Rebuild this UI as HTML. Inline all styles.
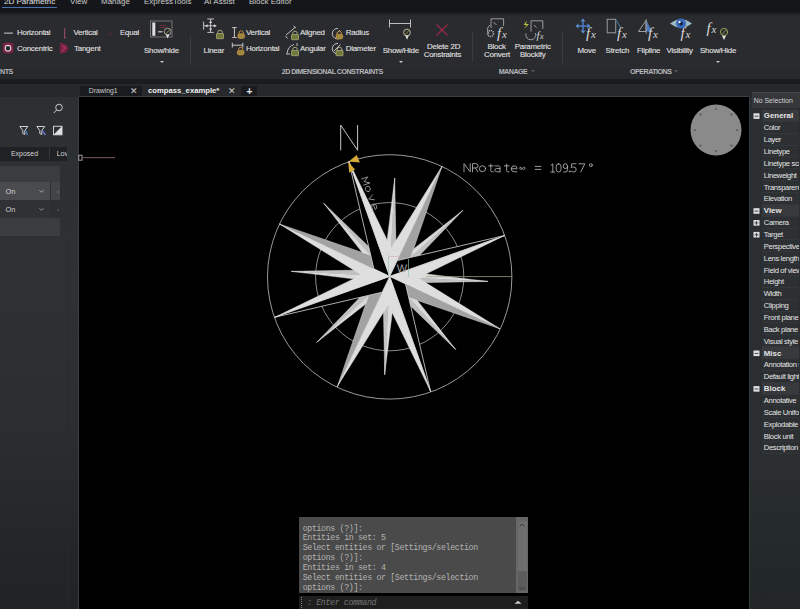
<!DOCTYPE html>
<html><head><meta charset="utf-8">
<style>
*{margin:0;padding:0;box-sizing:border-box}
html,body{width:800px;height:609px;overflow:hidden;background:#000}
body{position:relative;font-family:"Liberation Sans",sans-serif;color:#d8d8d8}
.a{position:absolute;white-space:nowrap}
#topbar{left:0;top:0;width:800px;height:12px;background:#151619}
#ribbon{left:0;top:11.5px;width:800px;height:67.5px;background:linear-gradient(#17181b 0px,#1e1f22 1.5px,#27282c 3px,#2a2b2f 4px,#2a2b2f 55.5px,#28292d 56.5px,#27282c 67.5px)}
#rbot{left:0;top:78.5px;width:800px;height:5px;background:#1b1c1f}
#docbar{left:0;top:83.5px;width:800px;height:13.5px;background:#26282b}
.tt{font-size:8px;line-height:10px;top:-3.4px;color:#cacaca}
.rl{font-size:7.9px;letter-spacing:-0.22px;color:#e2e2e2;line-height:10px;-webkit-text-stroke:0.1px #e2e2e2}
.sec{font-size:7.2px;letter-spacing:-0.55px;font-weight:bold;color:#b4b6b9;line-height:8px}
.sep{width:1px;background:#3a3c40}
#left{left:0;top:97px;width:78px;height:512px;background:linear-gradient(#2d3033 0px,#2e3134 200px,#2a2e31 330px,#222528 470px,#212427 512px)}
#lborder{left:78px;top:97px;width:1px;height:512px;background:#3a3c40}
#draw{left:79px;top:97px;width:670px;height:512px;background:#000}
#right{left:749px;top:97px;width:51px;height:512px;background:linear-gradient(#2b2e31 0px,#2b2e31 380px,#282c2d 385px,#252a2a 435px,#212526 519px);border-left:1px solid #383b3e}
.pr{font-size:7.2px;color:#d0d0d0;line-height:11.86px}
.cmd{font-family:"Liberation Mono",monospace;font-size:8.3px;letter-spacing:-0.37px;color:#b4b4b4;line-height:9.87px}
</style></head><body>
<div class="a" id="topbar"></div>
<div class="a" id="ribbon"></div>
<div class="a" id="rbot"></div>
<div class="a" id="docbar"></div>
<div class="a" id="left"></div>
<div class="a" id="lborder"></div>
<div class="a" style="left:67.5px;top:240px;width:1px;height:369px;background:#282b2e;opacity:0.7"></div>
<div class="a" id="draw"></div>
<div class="a" id="right"></div>

<!-- top tabs -->
<div class="a tt" style="left:4px;color:#e0e0e0">2D Parametric</div>
<div class="a" style="left:1.5px;top:7px;width:55.5px;height:1.2px;background:#4a72b0"></div>
<div class="a tt" style="left:70px">View</div>
<div class="a tt" style="left:101px">Manage</div>
<div class="a tt" style="left:144px">ExpressTools</div>
<div class="a tt" style="left:204px">AI Assist</div>
<div class="a tt" style="left:249px">Block Editor</div>

<!-- ribbon section 1 -->
<div class="a rl" style="left:17px;top:28px">Horizontal</div>
<div class="a rl" style="left:17px;top:43.7px">Concentric</div>
<div class="a rl" style="left:73.5px;top:27.5px">Vertical</div>
<div class="a rl" style="left:74px;top:43.6px">Tangent</div>
<div class="a rl" style="left:120px;top:27.5px">Equal</div>
<div class="a rl" style="left:144px;top:46px">Show/hide</div>
<div class="a" style="left:159.5px;top:60.5px;width:0;height:0;border-left:2px solid transparent;border-right:2px solid transparent;border-top:2px solid #ccc"></div>
<div class="a sep" style="left:190px;top:36px;height:27px"></div>
<div class="a sec" style="left:0px;top:67.5px">NTS</div>

<!-- section 2: dimensional -->
<div class="a rl" style="left:203.5px;top:45.7px">Linear</div>
<div class="a rl" style="left:246px;top:27.5px">Vertical</div>
<div class="a rl" style="left:246px;top:43.6px">Horizontal</div>
<div class="a rl" style="left:300px;top:27.7px">Aligned</div>
<div class="a rl" style="left:300px;top:43.7px">Angular</div>
<div class="a rl" style="left:345.7px;top:27.7px">Radius</div>
<div class="a rl" style="left:345.7px;top:43.7px">Diameter</div>
<div class="a rl" style="left:382.7px;top:45.7px">Show/Hide</div>
<div class="a" style="left:398.5px;top:61px;width:0;height:0;border-left:2px solid transparent;border-right:2px solid transparent;border-top:2px solid #ccc"></div>
<div class="a rl" style="left:427px;top:41.8px">Delete 2D</div>
<div class="a rl" style="left:423.7px;top:49.8px">Constraints</div>
<div class="a sec" style="left:281.7px;top:67.5px">2D DIMENSIONAL CONSTRAINTS</div>
<div class="a sep" style="left:472px;top:32px;height:30px"></div>

<!-- section 3: manage -->
<div class="a rl" style="left:487.5px;top:41.6px">Block</div>
<div class="a rl" style="left:484px;top:49.6px">Convert</div>
<div class="a rl" style="left:514.7px;top:41.6px">Parametric</div>
<div class="a rl" style="left:520px;top:49.6px">Blockify</div>
<div class="a sec" style="left:498.7px;top:67.5px">MANAGE</div>
<div class="a sep" style="left:562px;top:32px;height:31px"></div>

<!-- section 4: operations -->
<div class="a rl" style="left:577.5px;top:45.7px">Move</div>
<div class="a rl" style="left:605.6px;top:45.7px">Stretch</div>
<div class="a rl" style="left:637px;top:45.7px">Flipline</div>
<div class="a rl" style="left:666.5px;top:45.7px">Visibility</div>
<div class="a rl" style="left:700px;top:45.7px">Show/Hide</div>
<div class="a" style="left:715.5px;top:61px;width:0;height:0;border-left:2px solid transparent;border-right:2px solid transparent;border-top:2px solid #ccc"></div>
<div class="a sec" style="left:630px;top:67.5px">OPERATIONS</div>


<!-- ribbon icons -->
<svg class="a" style="left:0;top:0" width="800" height="80" viewBox="0 0 800 80">
<defs>
<g id="lockG"><path d="M1.2,3.2 v-1.2 a2.3,2.3 0 0 1 4.6,0 v1.2" fill="none" stroke="#b8b890" stroke-width="0.9"/><rect x="0" y="3" width="7" height="5.2" rx="0.6" fill="#6f7838" stroke="#a8ac78" stroke-width="0.8"/></g>
<g id="lockO"><path d="M1.2,3 v-1 a2.2,2.2 0 0 1 4.4,0 v1" fill="none" stroke="#c89040" stroke-width="0.9"/><rect x="0" y="2.8" width="6.8" height="4.6" rx="1.8" fill="#9a8a40" stroke="#c88a38" stroke-width="0.8"/></g>
<g id="fx"><text x="0" y="0" font-family="Liberation Serif" font-style="italic" font-size="15" fill="#d8d8d8">f</text><text x="5" y="0" font-family="Liberation Serif" font-style="italic" font-size="11" fill="#d8d8d8">x</text></g>
</defs>
<!-- section1 -->
<rect x="4" y="32.6" width="9" height="1" fill="#cfcfcf"/>
<rect x="2.8" y="42.8" width="10.5" height="10.5" rx="2" fill="#7c2240"/>
<circle cx="8" cy="48.2" r="2.8" fill="#262628" stroke="#d8d8d8" stroke-width="1.1"/>
<rect x="64" y="28" width="1.2" height="9" fill="#8c4a62"/>
<rect x="64" y="37" width="1.6" height="1.4" fill="#a05070"/>
<path d="M60,42.5 L66,44.5 L68.5,48 L66,52.5 L60,53.5 Z" fill="#7c2240"/>
<path d="M62,45.5 L65.5,48 L62,51" fill="none" stroke="#b04a6a" stroke-width="1"/>
<circle cx="110" cy="34" r="1.8" fill="#4a2a38"/>
<rect x="150.5" y="21" width="21.5" height="16" fill="none" stroke="#7c7c7c" stroke-width="0.9"/>
<rect x="152.3" y="22.5" width="3" height="13.3" fill="#e0e0e0"/>
<rect x="159.5" y="25" width="7" height="0.9" fill="#6a3444"/>
<rect x="159.5" y="27.2" width="7" height="0.9" fill="#6a3444"/>
<rect x="158" y="31.2" width="4.5" height="1.2" fill="#c8c8c8"/>
<circle cx="167.6" cy="31.6" r="3.4" fill="none" stroke="#b4b4a8" stroke-width="0.8"/>
<path d="M165.5,34 L170,29.5" stroke="#a8a840" stroke-width="0.8"/>
<path d="M165.8,34.6 L167.6,38.6 L169.4,34.6 Z" fill="#e0e0e0"/>
<!-- linear -->
<g stroke="#d0d0d0" stroke-width="0.9" fill="#d8d8d8">
<line x1="210.6" y1="19" x2="210.6" y2="32.4"/><line x1="207.3" y1="19" x2="214" y2="19" /><line x1="207.3" y1="32.4" x2="213.8" y2="32.4"/>
<line x1="203.6" y1="25.8" x2="216.3" y2="25.8"/><line x1="203.6" y1="21.6" x2="203.6" y2="29.8"/>
<path d="M210.6,20.5 l-1.6,2.6 h3.2z M210.6,31 l-1.6,-2.6 h3.2z M205,25.8 l2.6,-1.6 v3.2z M216.5,25.8 l-2.6,-1.6 v3.2z" stroke="none"/>
</g>
<use href="#lockG" x="216.5" y="30.5"/>
<!-- vertical/horizontal dims -->
<g stroke="#d8d8d8" stroke-width="0.9">
<line x1="234.4" y1="27.6" x2="234.4" y2="37.5"/><line x1="232.2" y1="27.6" x2="236.8" y2="27.6"/><line x1="232.2" y1="37.5" x2="236.8" y2="37.5" stroke="#d8b8d0"/>
<line x1="232.3" y1="45.2" x2="242.8" y2="45.2"/><line x1="232.3" y1="42.8" x2="232.3" y2="47.6"/><line x1="242.8" y1="42.8" x2="242.8" y2="47.6"/>
</g>
<use href="#lockO" x="237.8" y="31"/>
<use href="#lockO" x="237.3" y="47.5"/>
<!-- aligned / angular -->
<g stroke="#d0d0d0" stroke-width="0.9" fill="none">
<path d="M286,35 L295,27.5"/><path d="M285.5,36 l2,2.5 M293.5,26 l2.5,2"/>
<path d="M287,53.5 Q288,46 294,44.5"/><path d="M286,54 h4 M297,43 v3"/>
</g>
<use href="#lockG" x="291.5" y="31.5"/>
<use href="#lockG" x="291.5" y="47.5"/>
<!-- radius / diameter -->
<g stroke="#d0d0d0" stroke-width="0.9" fill="none">
<path d="M338,28.5 a5.2,5.2 0 1 0 4.5,6.5"/><path d="M336.5,33.5 l3.5,-3.5"/>
<path d="M338,43.5 a5.2,5.2 0 1 0 4.5,6.5"/><path d="M334,51 l6.5,-6.5"/>
</g>
<use href="#lockO" x="336" y="31.5"/>
<use href="#lockG" x="336" y="47.5"/>
<!-- show/hide dims -->
<g stroke="#d0d0d0" stroke-width="0.9" fill="none">
<line x1="389.5" y1="23.5" x2="410.5" y2="23.5"/><line x1="389.5" y1="19.5" x2="389.5" y2="27.5"/><line x1="410.5" y1="19.5" x2="410.5" y2="27.5"/>
</g>
<circle cx="407" cy="32.5" r="3.4" fill="none" stroke="#c8c8b0" stroke-width="0.9"/>
<path d="M405,34.8 L409,30.5" stroke="#b0a040" stroke-width="0.8"/>
<path d="M405.2,35.5 L407,39.8 L408.8,35.5 Z" fill="#e0e0e0"/>
<!-- delete X -->
<g stroke="#9c2a48" stroke-width="1.1"><line x1="436.5" y1="24.5" x2="447.5" y2="35.5"/><line x1="447.5" y1="24.5" x2="436.5" y2="35.5"/></g>
<!-- block convert -->
<g stroke="#a8a8a8" stroke-width="0.9" fill="none">
<path d="M491,28 V18.8 H503.6 V26"/><path d="M493.5,22 l3,3"/>
<path d="M490,25 a6,6 0 0 0 -1,9"/>
<circle cx="490.5" cy="33.5" r="3" stroke-dasharray="1.2 0.8" stroke-width="1.6"/>
</g>
<use href="#fx" x="497" y="37.5"/>
<!-- parametric blockify -->
<path d="M527,20.5 L523.5,25 L526.5,25 L524,29 L529,24 L526,24 Z" fill="#b8c040"/>
<g stroke="#a8a8a8" stroke-width="0.9" fill="none">
<path d="M531,31.5 V20.8 H542.8 V29"/><path d="M534,25 l2.5,2.5"/>
<path d="M535.5,33 a5,5 0 1 1 -9.5,0.5"/>
</g>
<g transform="translate(536.5,39) scale(0.72)"><use href="#fx"/></g>
<!-- move -->
<g stroke="#4a78c0" stroke-width="1.6"><line x1="583" y1="19.5" x2="583" y2="32.5"/><line x1="576.5" y1="26" x2="589.5" y2="26"/></g>
<path d="M583,18.5 l-2.5,3 h5z M583,33.5 l-2.5,-3 h5z M575.5,26 l3,-2.5 v5z M590.5,26 l-3,-2.5 v5z" fill="#5a88c8"/>
<use href="#fx" x="586" y="37.5"/>
<!-- stretch -->
<rect x="607.2" y="19.3" width="8.5" height="13.5" fill="none" stroke="#9a9a9a" stroke-width="1"/>
<path d="M616,20 L621,28" stroke="#3a7898" stroke-width="1.1"/>
<use href="#fx" x="617" y="37.5"/>
<!-- flipline -->
<path d="M646,20.5 L638.5,31.5 H646 Z" fill="none" stroke="#a0a0a0" stroke-width="1"/>
<path d="M646.5,20.5 L652,31.5 H646.5 Z" fill="#4a78c0"/>
<line x1="646.2" y1="19" x2="646.2" y2="34" stroke="#a8a8a8" stroke-width="0.8"/>
<use href="#fx" x="648" y="37.5"/>
<!-- visibility -->
<path d="M670,23.5 Q681,15 692,23.5 Q681,32 670,23.5 Z" fill="#9ab8c8"/>
<circle cx="681" cy="23.5" r="5" fill="#3a68b8"/>
<circle cx="681" cy="23.5" r="2" fill="#102040"/>
<circle cx="679.6" cy="22.2" r="1.1" fill="#ffffff"/>
<use href="#fx" x="680.5" y="37.5"/>
<!-- show/hide ops -->
<use href="#fx" x="706.5" y="32.5"/>
<circle cx="724" cy="32" r="3.6" fill="none" stroke="#a0b060" stroke-width="0.9"/>
<path d="M722,34.5 L726,30" stroke="#a0b060" stroke-width="0.8"/>
<path d="M722,35.8 L724,40 L726,35.8 Z" fill="#e0e0e0"/>
<!-- section chevrons -->
<path d="M531.5,70 l1.5,1.5 l1.5,-1.5" stroke="#8a8c90" stroke-width="0.8" fill="none"/>
<path d="M674.5,70 l1.5,1.5 l1.5,-1.5" stroke="#8a8c90" stroke-width="0.8" fill="none"/>
</svg>


<!-- left panel content -->
<svg class="a" style="left:0;top:95px" width="79" height="50" viewBox="0 95 79 50">
<circle cx="59" cy="107.5" r="3.3" fill="none" stroke="#c8c8c8" stroke-width="1"/>
<line x1="56.6" y1="110" x2="53.8" y2="113" stroke="#c8c8c8" stroke-width="1"/>
<path d="M19.8,126.5 h8 l-3,4 v4 l-2,-1 v-3 z" fill="none" stroke="#d0d0d0" stroke-width="1"/>
<path d="M25.5,130 l2,5" stroke="#4a7ac0" stroke-width="1.4"/>
<path d="M36.8,126.5 h8 l-3,4 v4 l-2,-1 v-3 z" fill="none" stroke="#d0d0d0" stroke-width="1"/>
<path d="M42,130.5 l3.5,4.5" stroke="#6a7ad0" stroke-width="1.4"/>
<rect x="53.5" y="126.3" width="8.5" height="8.5" fill="none" stroke="#d0d0d0" stroke-width="1"/>
<path d="M53.5,134.8 L62,126.3 V134.8 Z" fill="#e0e0e0"/>
</svg>
<div class="a" style="left:0;top:146.6px;width:66.5px;height:14px;background:#1f2124"></div>
<div class="a" style="left:49px;top:148px;width:1px;height:11px;background:#35373a"></div>
<div class="a" style="left:10.9px;top:149px;font-size:7px;line-height:10px;color:#d4d4d4">Exposed</div>
<div class="a" style="left:56.5px;top:149px;width:10px;overflow:hidden;font-size:7.4px;line-height:10px;color:#d0d0d0">Low</div>
<div class="a" style="left:0;top:165.5px;width:60px;height:16.4px;background:#3a3c40"></div>
<div class="a" style="left:0;top:181.9px;width:49.5px;height:18px;background:#494b4f"></div>
<div class="a" style="left:50.5px;top:181.9px;width:9.5px;height:18px;background:#424448"></div>
<div class="a" style="left:5.4px;top:187px;font-size:7.4px;line-height:10px;color:#d8d8d8">On</div>
<div class="a" style="left:0;top:200px;width:49.5px;height:17.5px;background:#2f3134"></div>
<div class="a" style="left:50.5px;top:200px;width:9.5px;height:17.5px;background:#2d2f32"></div>
<div class="a" style="left:5.4px;top:204.8px;font-size:7.4px;line-height:10px;color:#d0d0d0">On</div>
<div class="a" style="left:0;top:218px;width:60px;height:18px;background:#3a3c40"></div>
<svg class="a" style="left:0;top:180px" width="79" height="40" viewBox="0 180 79 40">
<path d="M39.5,190.3 l2,2 l2,-2" fill="none" stroke="#c0c0c0" stroke-width="0.8"/>
<path d="M39.5,208.3 l2,2 l2,-2" fill="none" stroke="#b0b0b0" stroke-width="0.8"/>
<rect x="57.5" y="191.5" width="1.2" height="1" fill="#909090"/>
<rect x="57.5" y="209.5" width="1.2" height="1" fill="#909090"/>
</svg>
<!-- drawing small red line -->
<svg class="a" style="left:76px;top:150px" width="45" height="15" viewBox="76 150 45 15">
<rect x="78.8" y="155.2" width="3.2" height="5" fill="none" stroke="#b8a8b0" stroke-width="0.9"/>
<line x1="82" y1="157.7" x2="115" y2="157.7" stroke="#7a5868" stroke-width="1"/>
</svg>

<!-- right panel -->
<div class="a" style="left:752.3px;top:92.4px;width:48px;height:15.3px;background:#35373b;border-top:1px solid #45474b"></div>
<div class="a" style="left:753.8px;top:96px;font-size:6.9px;line-height:10px;color:#d4d4d4">No Selection</div>
<div class="a" style="left:752px;top:109px;width:47px;height:345px;overflow:hidden">
<div class="a" style="left:10px;top:1.00px;width:40px;height:11.86px;background:#37393d;border-bottom:1px solid #33363a"></div><div class="a" style="left:11.8px;top:2.40px;line-height:10px;font-weight:bold;color:#e4e4e4;font-size:7.9px;">General</div>
<div class="a" style="left:10px;top:12.86px;width:40px;height:11.86px;background:#2d3033;border-bottom:1px solid #33363a"></div><div class="a" style="left:11.8px;top:14.26px;line-height:10px;color:#e4e4e4;font-size:7.6px;letter-spacing:-0.35px;">Color</div>
<div class="a" style="left:10px;top:24.72px;width:40px;height:11.86px;background:#2d3033;border-bottom:1px solid #33363a"></div><div class="a" style="left:11.8px;top:26.12px;line-height:10px;color:#e4e4e4;font-size:7.6px;letter-spacing:-0.35px;">Layer</div>
<div class="a" style="left:10px;top:36.58px;width:40px;height:11.86px;background:#2d3033;border-bottom:1px solid #33363a"></div><div class="a" style="left:11.8px;top:37.98px;line-height:10px;color:#e4e4e4;font-size:7.6px;letter-spacing:-0.35px;">Linetype</div>
<div class="a" style="left:10px;top:48.44px;width:40px;height:11.86px;background:#2d3033;border-bottom:1px solid #33363a"></div><div class="a" style="left:11.8px;top:49.84px;line-height:10px;color:#e4e4e4;font-size:7.6px;letter-spacing:-0.35px;">Linetype scale</div>
<div class="a" style="left:10px;top:60.30px;width:40px;height:11.86px;background:#2d3033;border-bottom:1px solid #33363a"></div><div class="a" style="left:11.8px;top:61.70px;line-height:10px;color:#e4e4e4;font-size:7.6px;letter-spacing:-0.35px;">Lineweight</div>
<div class="a" style="left:10px;top:72.16px;width:40px;height:11.86px;background:#2d3033;border-bottom:1px solid #33363a"></div><div class="a" style="left:11.8px;top:73.56px;line-height:10px;color:#e4e4e4;font-size:7.6px;letter-spacing:-0.35px;">Transparency</div>
<div class="a" style="left:10px;top:84.02px;width:40px;height:11.86px;background:#2d3033;border-bottom:1px solid #33363a"></div><div class="a" style="left:11.8px;top:85.42px;line-height:10px;color:#e4e4e4;font-size:7.6px;letter-spacing:-0.35px;">Elevation</div>
<div class="a" style="left:10px;top:95.88px;width:40px;height:11.86px;background:#37393d;border-bottom:1px solid #33363a"></div><div class="a" style="left:11.8px;top:97.28px;line-height:10px;font-weight:bold;color:#e4e4e4;font-size:7.9px;">View</div>
<div class="a" style="left:10px;top:107.74px;width:40px;height:11.86px;background:#2d3033;border-bottom:1px solid #33363a"></div><div class="a" style="left:11.8px;top:109.14px;line-height:10px;color:#e4e4e4;font-size:7.6px;letter-spacing:-0.35px;">Camera</div>
<div class="a" style="left:10px;top:119.60px;width:40px;height:11.86px;background:#2d3033;border-bottom:1px solid #33363a"></div><div class="a" style="left:11.8px;top:121.00px;line-height:10px;color:#e4e4e4;font-size:7.6px;letter-spacing:-0.35px;">Target</div>
<div class="a" style="left:10px;top:131.46px;width:40px;height:11.86px;background:#2d3033;border-bottom:1px solid #33363a"></div><div class="a" style="left:11.8px;top:132.86px;line-height:10px;color:#e4e4e4;font-size:7.6px;letter-spacing:-0.35px;">Perspective</div>
<div class="a" style="left:10px;top:143.32px;width:40px;height:11.86px;background:#2d3033;border-bottom:1px solid #33363a"></div><div class="a" style="left:11.8px;top:144.72px;line-height:10px;color:#e4e4e4;font-size:7.6px;letter-spacing:-0.35px;">Lens length</div>
<div class="a" style="left:10px;top:155.18px;width:40px;height:11.86px;background:#2d3033;border-bottom:1px solid #33363a"></div><div class="a" style="left:11.8px;top:156.58px;line-height:10px;color:#e4e4e4;font-size:7.6px;letter-spacing:-0.35px;">Field of view</div>
<div class="a" style="left:10px;top:167.04px;width:40px;height:11.86px;background:#2d3033;border-bottom:1px solid #33363a"></div><div class="a" style="left:11.8px;top:168.44px;line-height:10px;color:#e4e4e4;font-size:7.6px;letter-spacing:-0.35px;">Height</div>
<div class="a" style="left:10px;top:178.90px;width:40px;height:11.86px;background:#2d3033;border-bottom:1px solid #33363a"></div><div class="a" style="left:11.8px;top:180.30px;line-height:10px;color:#e4e4e4;font-size:7.6px;letter-spacing:-0.35px;">Width</div>
<div class="a" style="left:10px;top:190.76px;width:40px;height:11.86px;background:#2d3033;border-bottom:1px solid #33363a"></div><div class="a" style="left:11.8px;top:192.16px;line-height:10px;color:#e4e4e4;font-size:7.6px;letter-spacing:-0.35px;">Clipping</div>
<div class="a" style="left:10px;top:202.62px;width:40px;height:11.86px;background:#2d3033;border-bottom:1px solid #33363a"></div><div class="a" style="left:11.8px;top:204.02px;line-height:10px;color:#e4e4e4;font-size:7.6px;letter-spacing:-0.35px;">Front plane</div>
<div class="a" style="left:10px;top:214.48px;width:40px;height:11.86px;background:#2d3033;border-bottom:1px solid #33363a"></div><div class="a" style="left:11.8px;top:215.88px;line-height:10px;color:#e4e4e4;font-size:7.6px;letter-spacing:-0.35px;">Back plane</div>
<div class="a" style="left:10px;top:226.34px;width:40px;height:11.86px;background:#2d3033;border-bottom:1px solid #33363a"></div><div class="a" style="left:11.8px;top:227.74px;line-height:10px;color:#e4e4e4;font-size:7.6px;letter-spacing:-0.35px;">Visual style</div>
<div class="a" style="left:10px;top:238.20px;width:40px;height:11.86px;background:#37393d;border-bottom:1px solid #33363a"></div><div class="a" style="left:11.8px;top:239.60px;line-height:10px;font-weight:bold;color:#e4e4e4;font-size:7.9px;">Misc</div>
<div class="a" style="left:10px;top:250.06px;width:40px;height:11.86px;background:#2d3033;border-bottom:1px solid #33363a"></div><div class="a" style="left:11.8px;top:251.46px;line-height:10px;color:#e4e4e4;font-size:7.6px;letter-spacing:-0.35px;">Annotation scale</div>
<div class="a" style="left:10px;top:261.92px;width:40px;height:11.86px;background:#2d3033;border-bottom:1px solid #33363a"></div><div class="a" style="left:11.8px;top:263.32px;line-height:10px;color:#e4e4e4;font-size:7.6px;letter-spacing:-0.35px;">Default lighting</div>
<div class="a" style="left:10px;top:273.78px;width:40px;height:11.86px;background:#37393d;border-bottom:1px solid #33363a"></div><div class="a" style="left:11.8px;top:275.18px;line-height:10px;font-weight:bold;color:#e4e4e4;font-size:7.9px;">Block</div>
<div class="a" style="left:10px;top:285.64px;width:40px;height:11.86px;background:#2d3033;border-bottom:1px solid #33363a"></div><div class="a" style="left:11.8px;top:287.04px;line-height:10px;color:#e4e4e4;font-size:7.6px;letter-spacing:-0.35px;">Annotative</div>
<div class="a" style="left:10px;top:297.50px;width:40px;height:11.86px;background:#2d3033;border-bottom:1px solid #33363a"></div><div class="a" style="left:11.8px;top:298.90px;line-height:10px;color:#e4e4e4;font-size:7.6px;letter-spacing:-0.35px;">Scale Uniformly</div>
<div class="a" style="left:10px;top:309.36px;width:40px;height:11.86px;background:#2d3033;border-bottom:1px solid #33363a"></div><div class="a" style="left:11.8px;top:310.76px;line-height:10px;color:#e4e4e4;font-size:7.6px;letter-spacing:-0.35px;">Explodable</div>
<div class="a" style="left:10px;top:321.22px;width:40px;height:11.86px;background:#2d3033;border-bottom:1px solid #33363a"></div><div class="a" style="left:11.8px;top:322.62px;line-height:10px;color:#e4e4e4;font-size:7.6px;letter-spacing:-0.35px;">Block unit</div>
<div class="a" style="left:10px;top:333.08px;width:40px;height:11.86px;background:#2d3033;border-bottom:1px solid #33363a"></div><div class="a" style="left:11.8px;top:334.48px;line-height:10px;color:#e4e4e4;font-size:7.6px;letter-spacing:-0.35px;">Description</div>
<svg class="a" style="left:0;top:0" width="48" height="345" viewBox="0 0 48 345"><rect x="1.5" y="4.30" width="6" height="5.6" fill="#dedede"/><rect x="2.6" y="6.75" width="3.8" height="0.9" fill="#3a3a3a"/><rect x="1.5" y="99.18" width="6" height="5.6" fill="#dedede"/><rect x="2.6" y="101.63" width="3.8" height="0.9" fill="#3a3a3a"/><rect x="1.5" y="111.04" width="6" height="5.6" fill="#dedede"/><rect x="2.6" y="113.49" width="3.8" height="0.9" fill="#3a3a3a"/><rect x="4.05" y="112.04" width="0.9" height="3.8" fill="#3a3a3a"/><rect x="1.5" y="122.90" width="6" height="5.6" fill="#dedede"/><rect x="2.6" y="125.35" width="3.8" height="0.9" fill="#3a3a3a"/><rect x="4.05" y="123.90" width="0.9" height="3.8" fill="#3a3a3a"/><rect x="1.5" y="241.50" width="6" height="5.6" fill="#dedede"/><rect x="2.6" y="243.95" width="3.8" height="0.9" fill="#3a3a3a"/><rect x="1.5" y="277.08" width="6" height="5.6" fill="#dedede"/><rect x="2.6" y="279.53" width="3.8" height="0.9" fill="#3a3a3a"/></svg></div>

<!-- doc tabs -->
<div class="a" style="left:80px;top:86px;width:62px;height:10px;background:#1a1b1e"></div>
<div class="a" style="left:79px;top:96px;width:670px;height:1px;background:#3c3e42"></div>
<div class="a" style="left:88.8px;top:86.3px;font-size:6.8px;line-height:10px;color:#cccccc">Drawing1</div>
<div class="a" style="left:130px;top:86px;font-size:9px;line-height:10px;color:#d0d0d0">✕</div>
<div class="a" style="left:148px;top:86.3px;font-size:7.7px;line-height:10px;color:#f0f0f0;font-weight:bold">compass_example*</div>
<div class="a" style="left:228px;top:86px;font-size:9px;line-height:10px;color:#d0d0d0">✕</div>
<div class="a" style="left:241px;top:86px;width:16px;height:10px;background:#1a1b1e"></div>
<div class="a" style="left:246.5px;top:86.5px;font-size:10px;line-height:10px;color:#e8e8e8;font-weight:bold">+</div>

<!-- drawing -->
<svg class="a" style="left:0;top:0" width="800" height="609" viewBox="0 0 800 609">
<circle cx="389.7" cy="276.9" r="122.2" fill="none" stroke="#9a9a9a" stroke-width="1"/>
<circle cx="389.7" cy="276.7" r="74.1" fill="none" stroke="#9a9a9a" stroke-width="0.9"/>
<polygon points="389.70,276.40 394.73,178.03 384.51,261.80" fill="#dadada" stroke="#e6e6e6" stroke-width="0.4" stroke-linejoin="round"/>
<polygon points="389.70,276.40 394.73,178.03 396.36,262.40" fill="#c0c0c0" stroke="#e6e6e6" stroke-width="0.4" stroke-linejoin="round"/>
<polygon points="389.70,276.40 462.82,210.40 396.36,262.40" fill="#dadada" stroke="#e6e6e6" stroke-width="0.4" stroke-linejoin="round"/>
<polygon points="389.70,276.40 462.82,210.40 404.30,271.21" fill="#c0c0c0" stroke="#e6e6e6" stroke-width="0.4" stroke-linejoin="round"/>
<polygon points="389.70,276.40 488.07,281.43 404.30,271.21" fill="#dadada" stroke="#e6e6e6" stroke-width="0.4" stroke-linejoin="round"/>
<polygon points="389.70,276.40 488.07,281.43 403.70,283.06" fill="#c0c0c0" stroke="#e6e6e6" stroke-width="0.4" stroke-linejoin="round"/>
<polygon points="389.70,276.40 455.70,349.52 403.70,283.06" fill="#dadada" stroke="#e6e6e6" stroke-width="0.4" stroke-linejoin="round"/>
<polygon points="389.70,276.40 455.70,349.52 394.89,291.00" fill="#c0c0c0" stroke="#e6e6e6" stroke-width="0.4" stroke-linejoin="round"/>
<polygon points="389.70,276.40 384.67,374.77 394.89,291.00" fill="#dadada" stroke="#e6e6e6" stroke-width="0.4" stroke-linejoin="round"/>
<polygon points="389.70,276.40 384.67,374.77 383.04,290.40" fill="#c0c0c0" stroke="#e6e6e6" stroke-width="0.4" stroke-linejoin="round"/>
<polygon points="389.70,276.40 316.58,342.40 383.04,290.40" fill="#dadada" stroke="#e6e6e6" stroke-width="0.4" stroke-linejoin="round"/>
<polygon points="389.70,276.40 316.58,342.40 375.10,281.59" fill="#c0c0c0" stroke="#e6e6e6" stroke-width="0.4" stroke-linejoin="round"/>
<polygon points="389.70,276.40 291.33,271.37 375.10,281.59" fill="#dadada" stroke="#e6e6e6" stroke-width="0.4" stroke-linejoin="round"/>
<polygon points="389.70,276.40 291.33,271.37 375.70,269.74" fill="#c0c0c0" stroke="#e6e6e6" stroke-width="0.4" stroke-linejoin="round"/>
<polygon points="389.70,276.40 323.70,203.28 375.70,269.74" fill="#dadada" stroke="#e6e6e6" stroke-width="0.4" stroke-linejoin="round"/>
<polygon points="389.70,276.40 323.70,203.28 384.51,261.80" fill="#c0c0c0" stroke="#e6e6e6" stroke-width="0.4" stroke-linejoin="round"/>
<polygon points="389.70,276.40 442.17,166.04 383.84,259.91" fill="#dedede" stroke="#e6e6e6" stroke-width="0.4" stroke-linejoin="round"/>
<polygon points="389.70,276.40 442.17,166.04 406.19,270.54" fill="#a2a2a2" stroke="#e6e6e6" stroke-width="0.4" stroke-linejoin="round"/>
<polygon points="389.70,276.40 500.06,328.87 406.19,270.54" fill="#dedede" stroke="#e6e6e6" stroke-width="0.4" stroke-linejoin="round"/>
<polygon points="389.70,276.40 500.06,328.87 395.56,292.89" fill="#a2a2a2" stroke="#e6e6e6" stroke-width="0.4" stroke-linejoin="round"/>
<polygon points="389.70,276.40 337.23,386.76 395.56,292.89" fill="#dedede" stroke="#e6e6e6" stroke-width="0.4" stroke-linejoin="round"/>
<polygon points="389.70,276.40 337.23,386.76 373.21,282.26" fill="#a2a2a2" stroke="#e6e6e6" stroke-width="0.4" stroke-linejoin="round"/>
<polygon points="389.70,276.40 279.34,223.93 373.21,282.26" fill="#dedede" stroke="#e6e6e6" stroke-width="0.4" stroke-linejoin="round"/>
<polygon points="389.70,276.40 279.34,223.93 383.84,259.91" fill="#a2a2a2" stroke="#e6e6e6" stroke-width="0.4" stroke-linejoin="round"/>
<polygon points="389.70,276.40 348.77,161.26 373.90,268.89" fill="#000" stroke="#d8d8d8" stroke-width="0.8" stroke-linejoin="round"/>
<polygon points="389.70,276.40 348.77,161.26 397.21,260.60" fill="#dedede" stroke="#e6e6e6" stroke-width="0.4" stroke-linejoin="round"/>
<polygon points="389.70,276.40 504.84,235.47 397.21,260.60" fill="#000" stroke="#d8d8d8" stroke-width="0.8" stroke-linejoin="round"/>
<polygon points="389.70,276.40 504.84,235.47 405.50,283.91" fill="#dedede" stroke="#e6e6e6" stroke-width="0.4" stroke-linejoin="round"/>
<polygon points="389.70,276.40 430.63,391.54 405.50,283.91" fill="#000" stroke="#d8d8d8" stroke-width="0.8" stroke-linejoin="round"/>
<polygon points="389.70,276.40 430.63,391.54 382.19,292.20" fill="#dedede" stroke="#e6e6e6" stroke-width="0.4" stroke-linejoin="round"/>
<polygon points="389.70,276.40 274.56,317.33 382.19,292.20" fill="#000" stroke="#d8d8d8" stroke-width="0.8" stroke-linejoin="round"/>
<polygon points="389.70,276.40 274.56,317.33 373.90,268.89" fill="#dedede" stroke="#e6e6e6" stroke-width="0.4" stroke-linejoin="round"/>
<line x1="426" y1="276.6" x2="512" y2="276.6" stroke="#a8a488" stroke-width="0.9" opacity="0.85"/>
</svg>


<!-- drawing extras -->
<svg class="a" style="left:0;top:0" width="800" height="609" viewBox="0 0 800 609">
<path d="M340.7,150.3 V125.1 L357.6,150.3 V125.1" fill="none" stroke="#c8c8c8" stroke-width="1"/>
<path d="M356.7,155.1 L359.9,162.5 L348.7,161.5 Z" fill="#d8a838"/>
<path d="M348.2,162 L355.1,169.5 L349.2,172.7 Z" fill="#d8a838"/>
<g transform="translate(361.4,178.3) rotate(70.43)" fill="none" stroke="#9a9a9a" stroke-width="0.85" stroke-linecap="round" stroke-linejoin="round">
<path d="M0.8,0 V-6.5 L4,-1.5 L7.2,-6.5 V0"/><ellipse cx="12.2" cy="-2.5" rx="2.7" ry="2.5"/><path d="M19.4,-5 L22,0 L24.6,-5"/><path d="M28.4,-2.5 H34 Q34,-5 31.2,-5 Q28.4,-5 28.4,-2.5 Q28.4,0 31.2,0 H33.8"/>
</g>
<g font-family="Liberation Sans" fill="#9c9c9c" text-rendering="geometricPrecision">
</g>
<g fill="none" stroke="#b4b4b4" stroke-width="0.85" stroke-linecap="round" stroke-linejoin="round">
<path d="M464,171.8 V163.6 L470.2,171.8 V163.6"/>
<path d="M472.5,171.8 V163.6 H475.8 Q478,163.6 478,165.8 Q478,168 475.8,168 H472.5 M475.4,168 L478,171.8"/>
<ellipse cx="482.5" cy="168.75" rx="3.1" ry="3"/>
<path d="M490.8,164.2 V170.8 Q490.8,171.8 491.8,171.8 H493.2 M488.6,165.9 H493.2"/>
<path d="M495,165.9 H498.4 Q500,165.9 500,167.5 V171.8 M500,168.6 H496.7 Q494.8,168.6 494.8,170.2 Q494.8,171.8 496.7,171.8 H500"/>
<path d="M506.6,164.2 V170.8 Q506.6,171.8 507.6,171.8 H509 M504.4,165.9 H509"/>
<path d="M511.4,168.75 H517 Q517,165.8 514.2,165.8 Q511.3,165.8 511.3,168.8 Q511.3,171.8 514.2,171.8 H516.8"/>
<path d="M522.3,168.6 Q520.9,166.4 519.9,167.4 Q519.3,168.1 519.9,168.9 Q520.9,170.2 522.3,168.6 Q523.7,166.4 524.8,167.4 Q525.4,168.1 524.8,168.9 Q523.7,170.2 522.3,168.6" stroke-width="0.75"/>
<path d="M535.2,166.4 H541 M535.2,169.4 H541"/>
<path d="M551,165.2 L552.8,163.8 V172 M550.8,172 H554.6"/>
<path d="M558.6,163.8 Q556.2,163.8 556.2,166.5 V169.3 Q556.2,172 558.6,172 Q561,172 561,169.3 V166.5 Q561,163.8 558.6,163.8 Z"/>
<path d="M567.6,166.4 Q567.6,168.6 565.4,168.6 Q563.2,168.6 563.2,166.2 Q563.2,163.8 565.4,163.8 Q567.6,163.8 567.6,166.4 V169.5 Q567.6,172 565.4,172 H563.6"/>
<circle cx="569.6" cy="171.5" r="0.45"/>
<path d="M576,163.8 H571.7 L571.3,167.6 Q572.1,167 573.6,167 Q576.2,167 576.2,169.5 Q576.2,172 573.6,172 Q572,172 571.2,171.2"/>
<path d="M578.8,163.8 H584.8 L580.8,172"/>
<circle cx="590.8" cy="165.2" r="1.5"/>
</g>
<g font-family="Liberation Sans" fill="#9c9c9c" text-rendering="geometricPrecision">
<text x="396.8" y="272.3" font-size="11" fill="#a0a0a0">W</text>
</g>
<line x1="388.5" y1="255" x2="388.5" y2="275" stroke="#90c8a8" stroke-width="0.8" opacity="0.8"/>
<line x1="408.5" y1="259" x2="408.5" y2="277" stroke="#90c8a8" stroke-width="0.8" opacity="0.8"/>
<line x1="389" y1="256.5" x2="401" y2="256.5" stroke="#d8a8b8" stroke-width="0.8" opacity="0.7"/>
<path d="M391,248 l3,3 l3,-3" stroke="#c8d0c0" stroke-width="0.6" fill="none" opacity="0.6"/>
<!-- viewcube -->
<circle cx="716" cy="130" r="25.5" fill="#8a8a8a"/>
<g fill="#555">
<path d="M716,107.5 l-1.3,2.2 h2.6z"/><path d="M716,152.5 l-1.3,-2.2 h2.6z"/>
<path d="M693.5,130 l2.2,-1.3 v2.6z"/><path d="M738.5,130 l-2.2,-1.3 v2.6z"/>
<circle cx="700.5" cy="114.5" r="1.1"/><circle cx="731.5" cy="114.5" r="1.1"/>
<circle cx="700.5" cy="145.5" r="1.1"/><circle cx="731.5" cy="145.5" r="1.1"/>
</g>
</svg>

<!-- command window -->
<div class="a" style="left:299px;top:517px;width:229px;height:76px;background:#4a4a4a"></div>
<div class="a" style="left:516px;top:517px;width:12px;height:76px;background:#666"></div>
<div class="a" style="left:517.5px;top:521px;width:9px;height:50px;background:#6e6e6e"></div>
<div class="a" style="left:517.5px;top:571px;width:9px;height:20px;background:#5c5c5c"></div>

<div class="a cmd" style="left:302.7px;top:523.6px">options (?)]:<br>Entities in set: 5<br>Select entities or [Settings/selection<br>options (?)]:<br>Entities in set: 4<br>Select entities or [Settings/selection<br>options (?)]:</div>
<div class="a" style="left:299px;top:595.5px;width:229px;height:14px;background:#1e1e1e"></div>
<div class="a" style="left:301px;top:597px;width:1px;height:11px;border-left:1px dotted #808080"></div>
<div class="a cmd" style="left:307px;top:598.3px;font-style:italic;color:#757575">: Enter command</div>
<svg class="a" style="left:510px;top:515px" width="25" height="94" viewBox="510 515 25 94">
<path d="M519.5,526.5 l2.5,-2.5 l2.5,2.5" fill="none" stroke="#303030" stroke-width="0.9"/>
<path d="M519.5,587 l2.5,2.5 l2.5,-2.5" fill="none" stroke="#303030" stroke-width="0.9"/>
<path d="M514.5,603.8 l3.5,-3 l3.5,3 z" fill="#cfcfcf"/>
</svg>
</body></html>
